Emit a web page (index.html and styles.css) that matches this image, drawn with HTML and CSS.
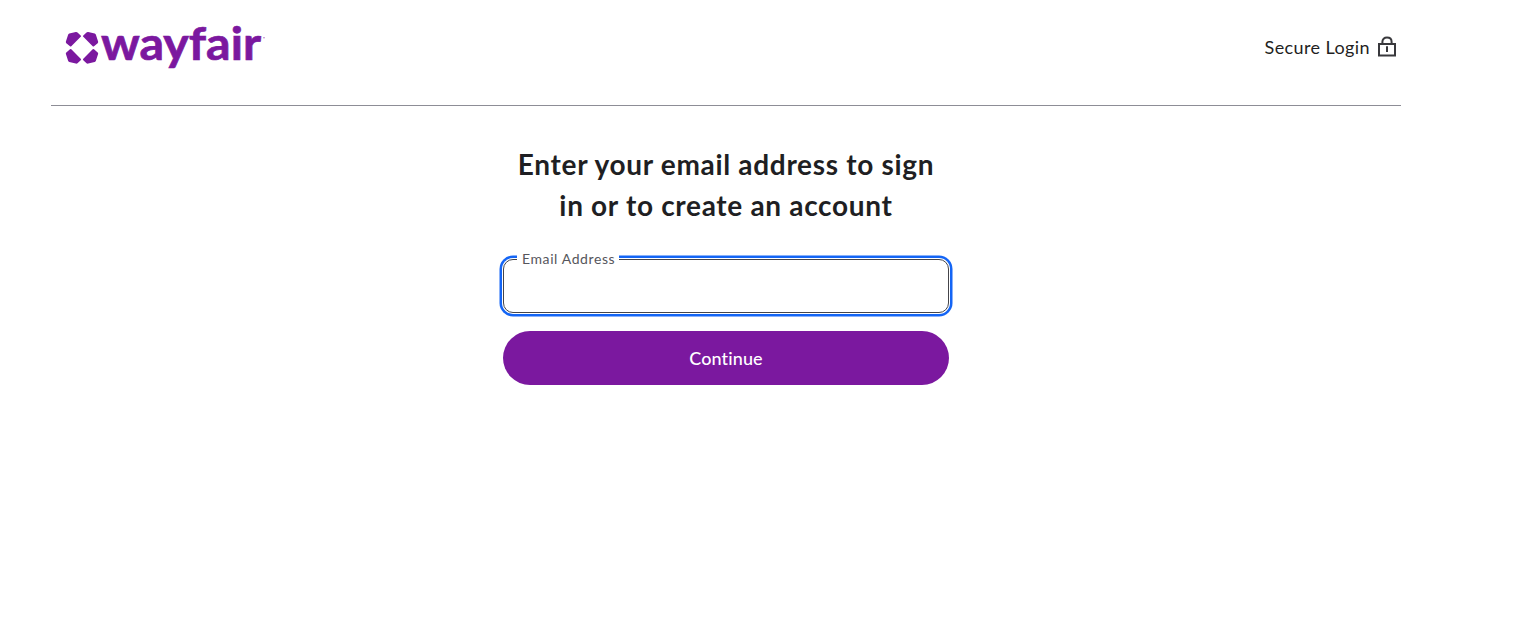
FILE: index.html
```html
<!DOCTYPE html>
<html lang="en">
<head>
    <meta charset="UTF-8">
    <meta name="viewport" content="width=device-width, initial-scale=1.0">
    <title>Wayfair Login</title>
    <link rel="stylesheet" href="styles.css">
</head>
<body>
    <div class="page">
        <header class="header">
            <a class="logo" aria-label="Wayfair">
                <svg width="204" height="70" viewBox="0 -10 204 70">
                    <g id="mark">
                        <path id="petal" d="M3.1 14.8Q3.4 13.9 4.3 13.6L10.8 12Q11.8 11.8 12.5 12.4L15.7 15.4Q16.4 16.1 15.7 16.8L6.3 26.3Q5.6 26.9 5 26.3L1.3 23.2Q.6 22.5 .9 21.6Z"/>
                        <use href="#petal" transform="matrix(-1 0 0 1 34 0)"/>
                        <use href="#petal" transform="matrix(1 0 0 -1 0 55.6)"/>
                        <use href="#petal" transform="matrix(-1 0 0 -1 34 55.6)"/>
                    </g>
                    <text class="wordmark" x="36" y="39.5" textLength="160" lengthAdjust="spacingAndGlyphs">wayfair</text>
                    <circle cx="199" cy="17.8" r=".8" opacity=".6"/>
                </svg>
            </a>
            <div class="secure">
                <span>Secure Login</span>
                <svg width="20" height="22" viewBox="0 0 20 22">
                    <path d="M2 8H18V19.5H2ZM5.4 8V5.8C5.4 3.2 7.2 1.5 10 1.5S14.6 3.2 14.6 5.8V8M10 10.2V16"/>
                </svg>
            </div>
        </header>
        <main class="login">
            <h1>Enter your email address to sign<br>in or to create an account</h1>
            <form>
                <div class="field">
                    <label for="email">Email Address</label>
                    <input type="email" id="email">
                </div>
                <button type="button">Continue</button>
            </form>
        </main>
    </div>
</body>
</html>
```

FILE: styles.css
```css
/* General styles */
* {
    box-sizing: border-box;
}

body {
    font-family: Lato, "Liberation Sans", sans-serif;
    margin: 0;
    background-color: #fff;
    color: #1f1f23;
}

.page {
    width: 1350px;
    margin-left: 51px;
}

/* Header */
.header {
    display: flex;
    justify-content: space-between;
    align-items: flex-start;
    height: 106px;
    padding: 10px 4px 0 14px;
    border-bottom: 1px solid #8d8d96;
}

.logo svg {
    display: block;
    overflow: visible;
    fill: #7b189f;
}

.wordmark {
    font-size: 46px;
    font-weight: 700;
    stroke: #7b189f;
    stroke-width: 0.7;
}

.secure {
    display: flex;
    align-items: center;
    gap: 7px;
    padding-top: 26px;
    font-size: 18px;
    line-height: 22px;
    letter-spacing: 0.4px;
}

.secure svg {
    fill: none;
    stroke: #39393d;
    stroke-width: 2;
}

/* Login form */
.login {
    width: 446px;
    margin: 38px auto 0;
}

h1 {
    margin: 0 0 33px;
    font-size: 28px;
    font-weight: 700;
    line-height: 41px;
    letter-spacing: 0.68px;
    text-align: center;
    white-space: nowrap;
}

.field {
    position: relative;
    height: 54px;
    margin-bottom: 18px;
}

.field label {
    position: absolute;
    top: -10px;
    left: 14px;
    padding: 0 4px 0 5px;
    background: #fff;
    color: #56565c;
    font-size: 14px;
    line-height: 20px;
    letter-spacing: 0.6px;
}

.field input {
    display: block;
    width: 100%;
    height: 54px;
    padding: 0 16px;
    border: 1px solid #45454a;
    border-radius: 10px;
    outline: none;
    box-shadow: 0 0 0 1px #fff, 0 0 0 3.5px #1465f5;
    font: inherit;
}

button {
    display: block;
    width: 100%;
    height: 54px;
    border: none;
    border-radius: 27px;
    background: #7b189f;
    color: #fff;
    font-family: inherit;
    font-size: 18px;
    font-weight: 500;
    font-variant-ligatures: none;
    letter-spacing: 0.1px;
    cursor: pointer;
}
```
